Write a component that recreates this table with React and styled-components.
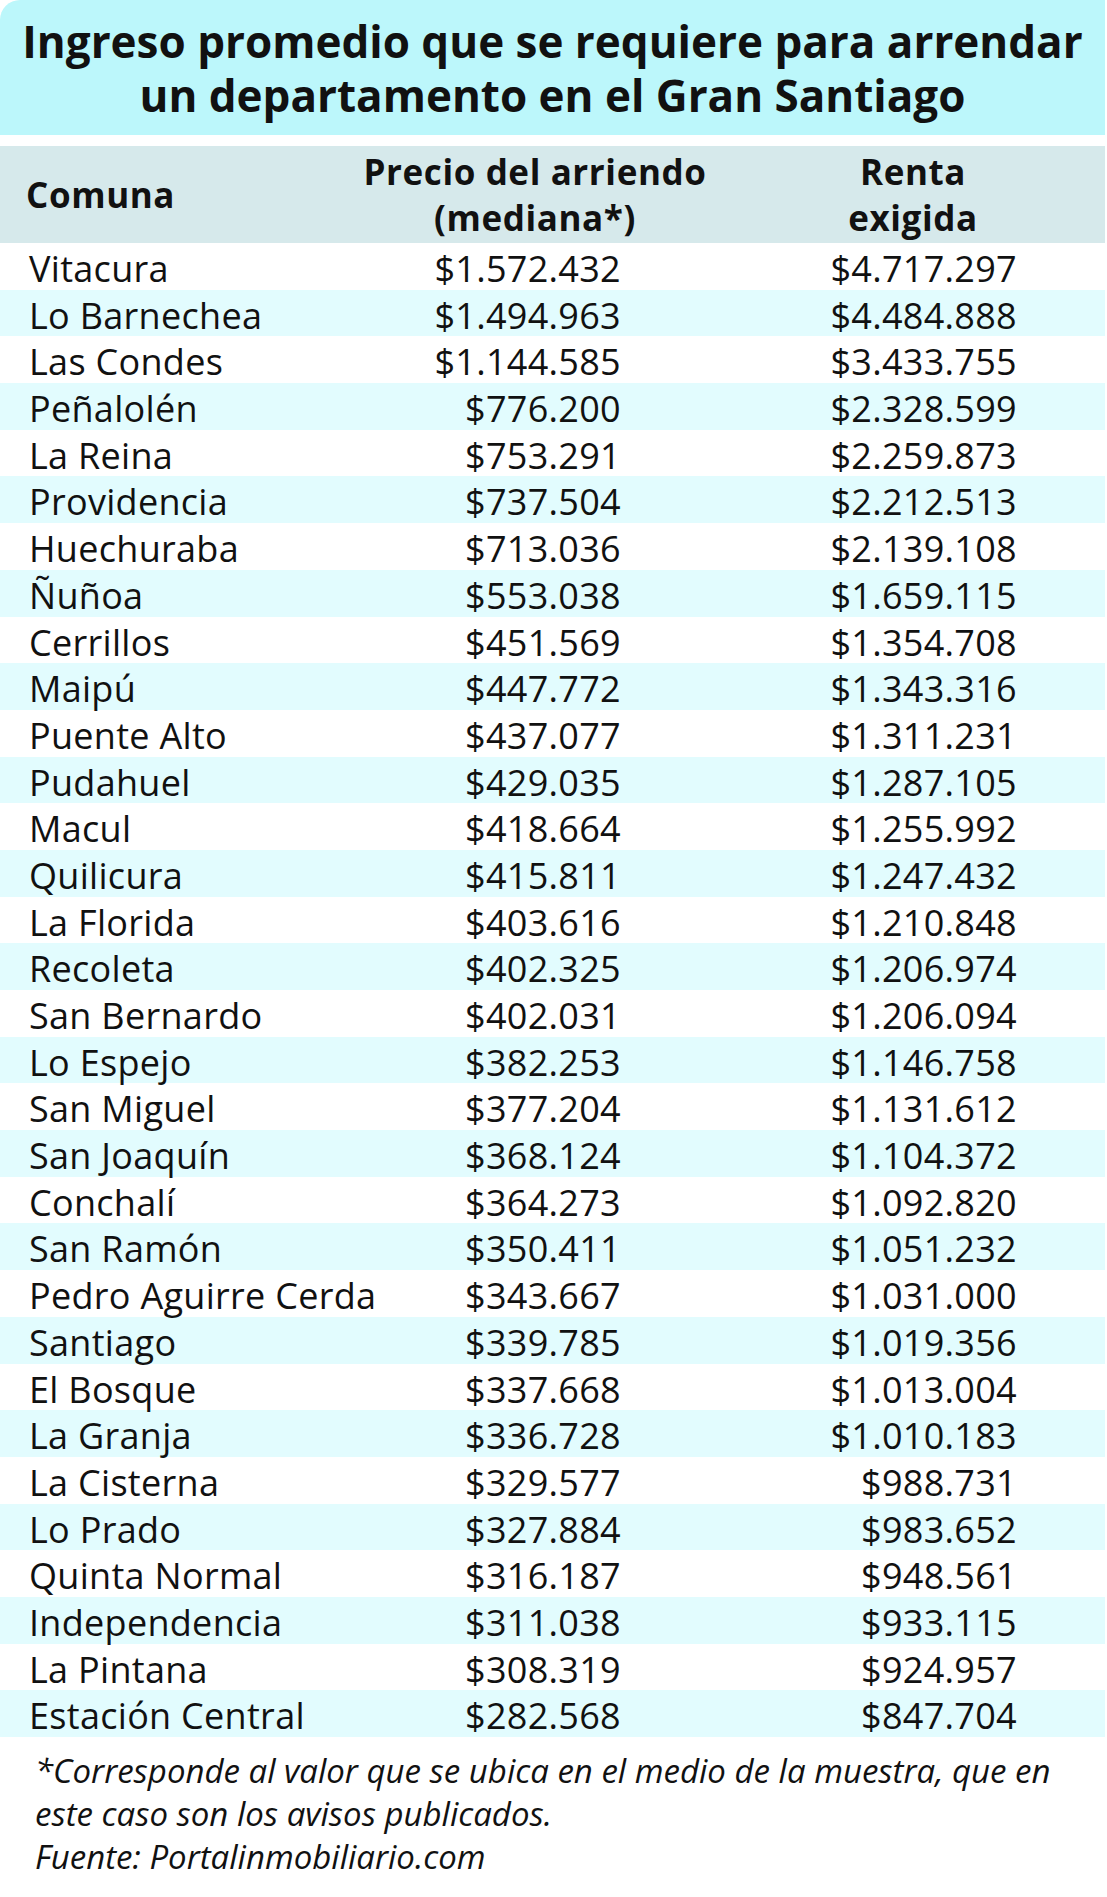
import React from 'react'
import styled, { createGlobalStyle } from 'styled-components'

const rows = [
  ['Vitacura', '$1.572.432', '$4.717.297'],
  ['Lo Barnechea', '$1.494.963', '$4.484.888'],
  ['Las Condes', '$1.144.585', '$3.433.755'],
  ['Peñalolén', '$776.200', '$2.328.599'],
  ['La Reina', '$753.291', '$2.259.873'],
  ['Providencia', '$737.504', '$2.212.513'],
  ['Huechuraba', '$713.036', '$2.139.108'],
  ['Ñuñoa', '$553.038', '$1.659.115'],
  ['Cerrillos', '$451.569', '$1.354.708'],
  ['Maipú', '$447.772', '$1.343.316'],
  ['Puente Alto', '$437.077', '$1.311.231'],
  ['Pudahuel', '$429.035', '$1.287.105'],
  ['Macul', '$418.664', '$1.255.992'],
  ['Quilicura', '$415.811', '$1.247.432'],
  ['La Florida', '$403.616', '$1.210.848'],
  ['Recoleta', '$402.325', '$1.206.974'],
  ['San Bernardo', '$402.031', '$1.206.094'],
  ['Lo Espejo', '$382.253', '$1.146.758'],
  ['San Miguel', '$377.204', '$1.131.612'],
  ['San Joaquín', '$368.124', '$1.104.372'],
  ['Conchalí', '$364.273', '$1.092.820'],
  ['San Ramón', '$350.411', '$1.051.232'],
  ['Pedro Aguirre Cerda', '$343.667', '$1.031.000'],
  ['Santiago', '$339.785', '$1.019.356'],
  ['El Bosque', '$337.668', '$1.013.004'],
  ['La Granja', '$336.728', '$1.010.183'],
  ['La Cisterna', '$329.577', '$988.731'],
  ['Lo Prado', '$327.884', '$983.652'],
  ['Quinta Normal', '$316.187', '$948.561'],
  ['Independencia', '$311.038', '$933.115'],
  ['La Pintana', '$308.319', '$924.957'],
  ['Estación Central', '$282.568', '$847.704'],
]

const GlobalStyle = createGlobalStyle`
  body {
    margin: 0;
    background: #fff;
    font-family: "Open Sans", "Noto Sans", sans-serif;
    color: #111;
  }
`

const Page = styled.div`
  width: 1105px;
`

const TitleBand = styled.header`
  height: 135px;
  background: #bcf7fb;
  border-top-left-radius: 20px;
  display: flex;
  align-items: center;
  justify-content: center;
  margin-bottom: 11px;
`

const Title = styled.h1`
  margin: 0;
  font-size: 44px;
  font-weight: 700;
  line-height: 54px;
  text-align: center;
  white-space: nowrap;
`

const HeadRow = styled.div`
  height: 97px;
  background: #d6e9eb;
  display: grid;
  grid-template-columns: 300px 418px 338px;
  padding-left: 26px;
  align-items: center;
  font-size: 35px;
  font-weight: 700;
  line-height: 46px;
  letter-spacing: 0.6px;
`

const HeadCell = styled.div`
  text-align: ${p => (p.$center ? 'center' : 'left')};
  white-space: nowrap;
`

const Row = styled.div`
  height: 46.7px;
  background: ${p => (p.$alt ? '#e2fcfe' : '#fff')};
  display: grid;
  grid-template-columns: 392px 200px 396px;
  padding-left: 29px;
  align-items: center;
  font-size: 36px;
  line-height: 46.7px;
  letter-spacing: 0.3px;
`

const Cell = styled.div`
  text-align: ${p => (p.$right ? 'right' : 'left')};
  padding-top: 3px;
  white-space: nowrap;
`

const Notes = styled.p`
  margin: 0;
  padding: 12px 0 0 35px;
  font-style: italic;
  font-size: 33px;
  line-height: 43px;
  white-space: nowrap;
`

export default function App() {
  return (
    <Page>
      <GlobalStyle />
      <TitleBand>
        <Title>
          Ingreso promedio que se requiere para arrendar
          <br />
          un departamento en el Gran Santiago
        </Title>
      </TitleBand>
      <HeadRow>
        <HeadCell>Comuna</HeadCell>
        <HeadCell $center>
          Precio del arriendo
          <br />
          (mediana*)
        </HeadCell>
        <HeadCell $center>
          Renta
          <br />
          exigida
        </HeadCell>
      </HeadRow>
      {rows.map(([comuna, precio, renta], i) => (
        <Row key={comuna} $alt={i % 2 === 1}>
          <Cell>{comuna}</Cell>
          <Cell $right>{precio}</Cell>
          <Cell $right>{renta}</Cell>
        </Row>
      ))}
      <Notes>
        *Corresponde al valor que se ubica en el medio de la muestra, que en
        <br />
        este caso son los avisos publicados.
        <br />
        Fuente: Portalinmobiliario.com
      </Notes>
    </Page>
  )
}
